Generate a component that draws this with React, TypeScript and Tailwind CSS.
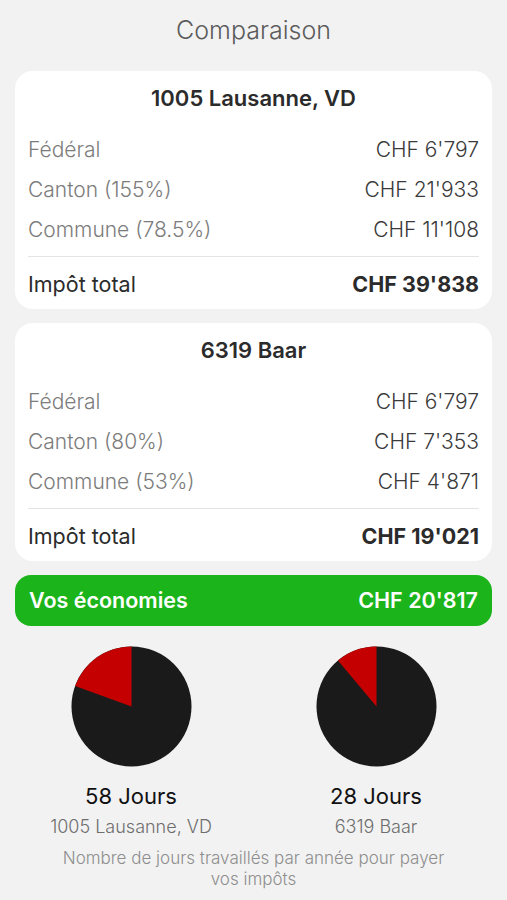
import React from "react"

type Row = { label: string; value: string }

interface CityCardProps {
    title: string
    rows: Row[]
    total: string
}

const CityCard = ({ title, rows, total }: CityCardProps) => {
    return (
        <div className="bg-white rounded-[18px] px-[13px] pt-[14px] pb-[5px]">
            <div className="h-[26px] flex items-center justify-center text-[22px] font-semibold text-[#2b2b2b]">
                {title}
            </div>
            <div className="mt-[19px] flex flex-col">
                {rows.map((row) => (
                    <div
                        key={row.label}
                        className="h-[40px] flex items-center justify-between text-[21px] font-light"
                    >
                        <span className="text-[#7c7c7c]">{row.label}</span>
                        <span className="text-[#3a3a3a]">{row.value}</span>
                    </div>
                ))}
            </div>
            <div className="mt-[6px] h-px bg-[#e4e4e4]" />
            <div className="mt-[7px] h-[40px] flex items-center justify-between text-[21.5px] text-[#2b2b2b]">
                <span>Impôt total</span>
                <span className="font-bold">{total}</span>
            </div>
        </div>
    )
}

// angle in degrees, measured counterclockwise from 12 o'clock
const Pie = ({ angle }: { angle: number }) => {
    const r = 60
    const rad = (angle * Math.PI) / 180
    const x = 60 - Math.sin(rad) * r
    const y = 60 - Math.cos(rad) * r
    const large = angle > 180 ? 1 : 0
    return (
        <svg width="121" height="121" viewBox="-0.5 -0.5 121 121">
            <circle cx="60" cy="60" r={r} fill="#1a1a1a" />
            <path
                d={`M60 60 L60 0 A${r} ${r} 0 ${large} 0 ${x} ${y} Z`}
                fill="#c40000"
            />
        </svg>
    )
}

const DaysColumn = ({
    angle,
    days,
    city,
}: {
    angle: number
    days: string
    city: string
}) => (
    <div className="w-[245px] shrink-0 flex flex-col items-center">
        <Pie angle={angle} />
        <div className="mt-[15px] text-[22px] leading-[28px] text-[#111]">
            {days}
        </div>
        <div className="mt-[6px] text-[18px] leading-[22px] font-light text-[#6e6e6e]">
            {city}
        </div>
    </div>
)

export default function App() {
    return (
        <div
            className="min-h-[900px] bg-[#f2f2f2] px-[15px] pb-[10px]"
            style={{ fontFamily: "Inter, 'Noto Sans', sans-serif" }}
        >
            <div className="h-[60px] pt-[14px] text-center text-[25px] leading-[32px] font-light text-[#5c5c5c]">
                Comparaison
            </div>
            <div className="mt-[11px] flex flex-col gap-[14px]">
                <CityCard
                    title="1005 Lausanne, VD"
                    rows={[
                        { label: "Fédéral", value: "CHF 6'797" },
                        { label: "Canton (155%)", value: "CHF 21'933" },
                        { label: "Commune (78.5%)", value: "CHF 11'108" },
                    ]}
                    total="CHF 39'838"
                />
                <CityCard
                    title="6319 Baar"
                    rows={[
                        { label: "Fédéral", value: "CHF 6'797" },
                        { label: "Canton (80%)", value: "CHF 7'353" },
                        { label: "Commune (53%)", value: "CHF 4'871" },
                    ]}
                    total="CHF 19'021"
                />
                <div className="h-[51px] rounded-[16px] bg-[#1bb51b] px-[14px] flex items-center justify-between text-white text-[21.5px] font-semibold">
                    <span>Vos économies</span>
                    <span>CHF 20'817</span>
                </div>
            </div>
            <div className="mt-[20px] flex justify-center">
                <DaysColumn angle={70} days="58 Jours" city="1005 Lausanne, VD" />
                <DaysColumn angle={40} days="28 Jours" city="6319 Baar" />
            </div>
            <p className="mt-[10px] mx-auto w-[400px] text-center text-[17px] leading-[21px] font-light text-[#8e8e8e]">
                Nombre de jours travaillés par année pour payer vos impôts
            </p>
        </div>
    )
}
